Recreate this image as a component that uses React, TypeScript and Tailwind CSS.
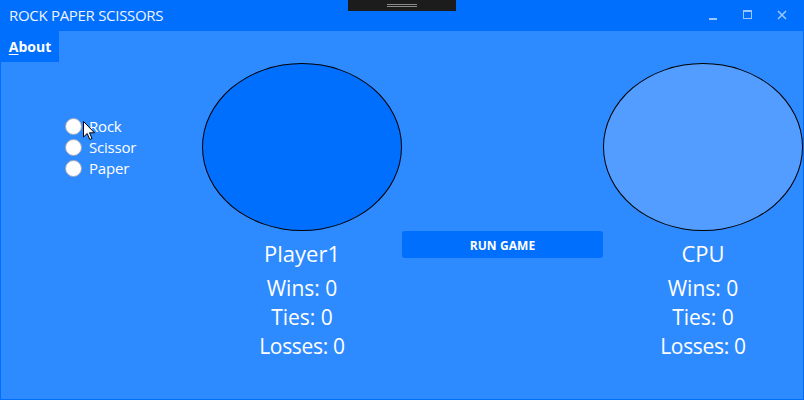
import { useState } from "react";

const OPTIONS = ["Rock", "Scissor", "Paper"];

function ScoreColumn({ name, fill }: { name: string; fill: string }) {
  return (
    <div className="flex w-[200px] flex-col items-center">
      <div className={`h-[168px] w-[200px] rounded-[50%] border border-black ${fill}`} />
      <div className="mt-[7px] text-[22px] leading-[30px]">{name}</div>
      <div className="mt-[6px] flex flex-col items-center text-[21px] leading-[29px]">
        <span>Wins: 0</span>
        <span>Ties: 0</span>
        <span className="tracking-[-0.3px]">Losses: 0</span>
      </div>
    </div>
  );
}

export default function App() {
  const [choice, setChoice] = useState<string | null>(null);

  return (
    <div
      className="relative flex h-[400px] w-[804px] flex-col overflow-hidden bg-[#006ffe] text-white"
      style={{ fontFamily: '"Open Sans", "Noto Sans", sans-serif' }}
    >
      {/* title bar */}
      <div className="relative flex h-[31px] shrink-0 items-center justify-between pl-[9px]">
        <span className="text-[15px] tracking-[-0.3px] text-[#eef4ff]">ROCK PAPER SCISSORS</span>
        <div className="absolute left-[348px] top-0 flex h-[11px] w-[108px] flex-col items-center justify-center gap-[1px] bg-[#1c1c1c]">
          <div className="h-[1px] w-[30px] bg-[#8a8a8a]" />
          <div className="h-[1px] w-[30px] bg-[#8a8a8a]" />
        </div>
        <div className="flex h-full items-center">
          <div className="flex h-full w-[34px] items-center justify-center">
            <div className="mt-[7px] h-[2px] w-[8px] bg-[#9cc6ff]" />
          </div>
          <div className="flex h-full w-[34px] items-center justify-center">
            <div className="mb-[2px] h-[9px] w-[9px] border border-t-2 border-[#9cc6ff]" />
          </div>
          <div className="flex h-full w-[40px] items-center justify-center pr-[4px]">
            <svg width="10" height="10" viewBox="0 0 10 10" className="mb-[2px]">
              <path d="M1 1 L9 9 M9 1 L1 9" stroke="#9cc6ff" strokeWidth="1.6" />
            </svg>
          </div>
        </div>
      </div>

      {/* window body */}
      <div className="mx-[1px] mb-[1px] flex flex-1 flex-col bg-[#2e8aff]">
        <div className="flex h-[31px] shrink-0">
          <div className="flex w-[58px] items-center justify-center bg-[#006ffe] text-[14px] font-bold">
            <span>
              <span className="underline decoration-[1px] underline-offset-[2px]">A</span>bout
            </span>
          </div>
        </div>

        <div className="flex pt-[1px]">
          <div className="w-[201px] pl-[64px] pt-[55px]">
            <div className="flex flex-col gap-[4px]">
              {OPTIONS.map((o) => (
                <label key={o} className="flex h-[17px] items-center gap-[7px] text-[15px]" onClick={() => setChoice(o)}>
                  <span className="flex h-[17px] w-[17px] items-center justify-center rounded-full border border-[#9ba7b8] bg-white">
                    {choice === o && <span className="h-[7px] w-[7px] rounded-full bg-black" />}
                  </span>
                  <span className="leading-none tracking-[-0.2px]">{o}</span>
                </label>
              ))}
            </div>
          </div>

          <ScoreColumn name="Player1" fill="bg-[#006ffe]" />

          <div className="flex w-[201px] justify-center pt-[168px]">
            <button className="h-[27px] w-[201px] rounded-[3px] bg-[#006ffe] pt-[2px] text-[12px] font-bold tracking-[0.1px]">
              RUN GAME
            </button>
          </div>

          <ScoreColumn name="CPU" fill="bg-[#529dff]" />
        </div>
      </div>

      {/* mouse cursor */}
      <svg className="pointer-events-none absolute left-[83px] top-[121px]" width="13" height="20" viewBox="0 0 13 20">
        <path d="M0.5 0.5 L0.5 16 L4.2 12.5 L6.8 18.5 L9 17.5 L6.5 11.8 L11.5 11.8 Z" fill="white" stroke="black" strokeWidth="1" />
      </svg>
    </div>
  );
}
